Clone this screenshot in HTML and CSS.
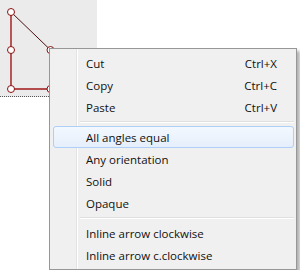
FILE: index.html
```html
<!DOCTYPE html>
<html lang="en">
<head>
    <meta charset="UTF-8">
    <title>Shape context menu</title>
    <link rel="stylesheet" href="styles.css">
</head>
<body>
    <div class="canvas">
        <svg class="shape" width="97" height="96" viewBox="0 0 97 96">
            <line x1="11" y1="12" x2="50.5" y2="50" class="edge-thin"/>
            <polyline points="11,12 11,89 50.5,89 50.5,50" class="edge"/>
            <circle cx="11" cy="12" r="3.5" class="handle"/>
            <circle cx="11" cy="50" r="3.5" class="handle"/>
            <circle cx="11" cy="89" r="3.5" class="handle"/>
            <circle cx="50.5" cy="50" r="3.5" class="handle"/>
            <circle cx="50.5" cy="89" r="3.5" class="handle"/>
        </svg>
    </div>

    <!-- context menu -->
    <div class="menu">
        <div class="item"><span>Cut</span><span class="key">Ctrl+X</span></div>
        <div class="item"><span>Copy</span><span class="key">Ctrl+C</span></div>
        <div class="item"><span>Paste</span><span class="key">Ctrl+V</span></div>
        <div class="sep"></div>
        <div class="item active"><span>All angles equal</span></div>
        <div class="item"><span>Any orientation</span></div>
        <div class="item"><span>Solid</span></div>
        <div class="item"><span>Opaque</span></div>
        <div class="sep"></div>
        <div class="item"><span>Inline arrow clockwise</span></div>
        <div class="item"><span>Inline arrow c.clockwise</span></div>
    </div>
</body>
</html>
```
FILE: styles.css
```css
body {
    margin: 0;
    background-color: #fff;
    font-family: "Open Sans", "Noto Sans", sans-serif;
    font-size: 11.5px;
    color: #111;
    width: 300px;
    height: 270px;
    overflow: hidden;
    position: relative;
}

.canvas {
    width: 97px;
    height: 96px;
    background-color: #ebebeb;
    border-bottom: 1px dotted #555;
}

.shape {
    display: block;
}

.edge {
    fill: none;
    stroke: #a01818;
    stroke-width: 1.4;
}

.edge-thin {
    stroke: #4a1010;
    stroke-width: 1;
}

.handle {
    fill: #fff;
    stroke: #8a1010;
    stroke-width: 1;
}

.menu {
    position: absolute;
    left: 49px;
    top: 48px;
    width: 241px;
    padding: 3px 2px 3px 3px;
    background:
        linear-gradient(to right, transparent 26px, #e2e3e3 26px, #e2e3e3 27px, #fff 27px, #fff 28px, transparent 28px),
        #f0f0f0;
    border: 1px solid #979797;
    box-shadow: 3px 3px 3px rgba(0, 0, 0, 0.3);
}

.item {
    display: flex;
    justify-content: space-between;
    align-items: center;
    height: 20px;
    padding: 0 16px 0 32px;
    border: 1px solid transparent;
    border-radius: 3px;
    white-space: nowrap;
}

.item.active {
    border-color: #aecff7;
    background: linear-gradient(#f3f8fe, #e5eefb);
}

.sep {
    height: 8px;
    margin-left: 27px;
    background: linear-gradient(to bottom, transparent 3px, #e0e0e0 3px, #e0e0e0 4px, #fff 4px, #fff 5px, transparent 5px);
}
```
